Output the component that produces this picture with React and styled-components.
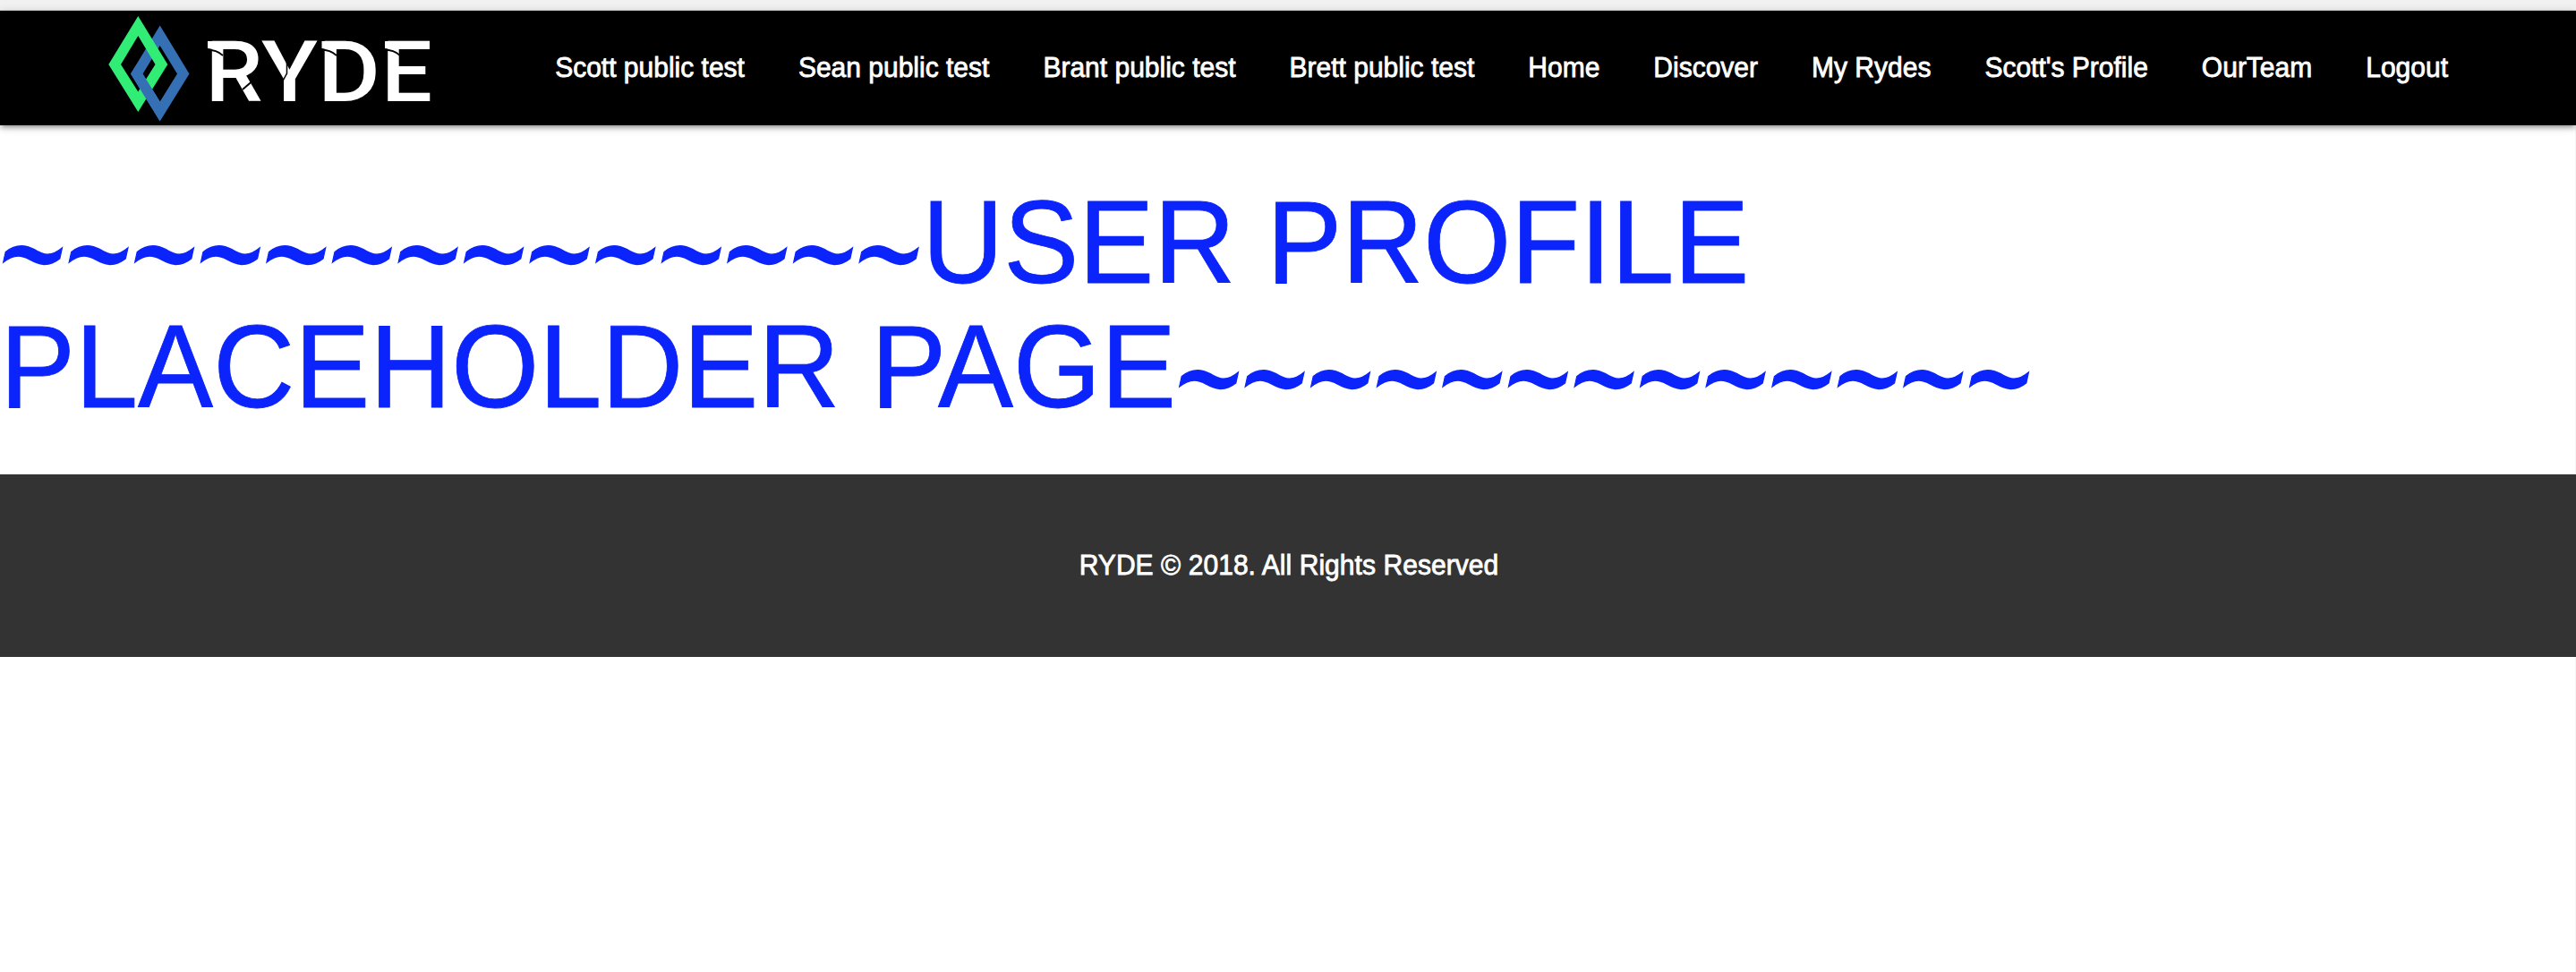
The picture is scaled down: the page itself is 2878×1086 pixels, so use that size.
import React from 'react';
import styled, { createGlobalStyle } from 'styled-components';

const GlobalStyle = createGlobalStyle`
  * { box-sizing: border-box; }
  body {
    margin: 0;
    background: #fff;
    color: #fff;
    font-family: "Liberation Sans", Helvetica, Arial, sans-serif;
    font-size: 30px;
  }
`;

const Page = styled.div`
  min-height: 1086px;
  border-right: 1px solid #f3f3f3;
`;

const TopStrip = styled.div`
  height: 12px;
  margin-right: -1px;
  background: #f1f1f1;
  border-bottom: 1px solid #cfcfcf;
`;

const Nav = styled.nav`
  display: flex;
  align-items: flex-start;
  justify-content: space-between;
  height: 128px;
  margin-right: -1px;
  padding: 0 113px 0 115px;
  background: #000;
  box-shadow: 0 4px 4px rgba(0, 0, 0, 0.14), 0 6px 2px -4px rgba(0, 0, 0, 0.12),
    0 2px 10px rgba(0, 0, 0, 0.2);
`;

const Logo = styled.svg`
  display: block;
  width: 375px;
  height: 128px;
`;

const Menu = styled.ul`
  display: flex;
  margin: 0;
  padding: 0;
  list-style: none;
`;

const MenuLink = styled.a`
  display: block;
  padding: 0 30px;
  line-height: 128px;
  white-space: nowrap;
  color: #fff;
  -webkit-text-stroke: 0.8px #fff;
  transform: scaleY(1.05);
  transform-origin: 50% 74px;
`;

const Title = styled.h1`
  margin: 62px 0 64.4px;
  color: #0b24fb;
  font-size: 126px;
  font-weight: 400;
  line-height: 132px;
  -webkit-text-stroke: 0.8px #0b24fb;
  transform: scaleY(1.05);
  transform-origin: 0 0;
`;

const Tildes = styled.span`
  display: inline-block;
  -webkit-text-stroke: 1.2px #0b24fb;
  transform: translateY(12px) scaleY(1.25) skewX(-16deg);
`;

const Footer = styled.footer`
  height: 204px;
  margin-right: -1px;
  background: #333;
  text-align: center;
  line-height: 204px;
`;

const Copyright = styled.span`
  display: block;
  padding-left: 2px;
  letter-spacing: 0.06px;
  -webkit-text-stroke: 0.8px #fff;
  transform: scaleY(1.05);
  transform-origin: 50% 112px;
`;

const links = [
  'Scott public test', 'Sean public test', 'Brant public test', 'Brett public test',
  'Home', 'Discover', 'My Rydes', "Scott's Profile", 'OurTeam', 'Logout',
];

function RydeLogo() {
  return (
    <Logo viewBox="115 12 375 128">
      <path fill="#3470b3" fillRule="evenodd" d="M178.7 28.5 211.5 82.5 178.7 135.5 146 82.5ZM178.7 51 159.5 82.5 178.7 113.5 198 82.5Z" />
      <path fill="#31ed75" fillRule="evenodd" d="M154.3 18 187.3 72 154.3 125 121.3 72ZM154.3 40 135 72 154.3 102.5 173.5 72Z" />
      <path fill="#3470b3" d="M146 82.5 152.5 72 159.5 82.5 178.7 113.5V135.5Z" />
      <g fill="#fff" fontFamily="Roboto, sans-serif" fontWeight="500" fontSize="94.5">
        <text x="229.5" y="113" textLength="64" lengthAdjust="spacingAndGlyphs">R</text>
        <text x="292" y="113" textLength="63" lengthAdjust="spacingAndGlyphs">Y</text>
        <text x="355" y="113" textLength="70" lengthAdjust="spacingAndGlyphs">D</text>
        <text x="426" y="113" textLength="57" lengthAdjust="spacingAndGlyphs">E</text>
      </g>
      {/* serifs that overhang the stems */}
      <path fill="#fff" d="M232 46h12v10l-12-2ZM359.500 46h12v10l-12-2ZM430 46h12v10l-12-2Z" />
      {/* stencil cuts */}
      <g fill="none" stroke="#000" strokeWidth="1.8">
        <path d="M231 55.500Q242 55.500 249 62" />
        <path d="M358.500 55.500Q369 55.500 376 62" />
        <path d="M429 55.500Q440 55.500 447 62" />
        <path d="M285 88 271 100" strokeWidth="2" />
        <path d="M320.500 70V82L315 92" strokeWidth="1.5" />
      </g>
    </Logo>
  );
}

export default function App() {
  return (
    <>
      <GlobalStyle />
      <Page>
        <TopStrip />
        <Nav>
          <RydeLogo />
          <Menu>
            {links.map((label) => (
              <li key={label}><MenuLink>{label}</MenuLink></li>
            ))}
          </Menu>
        </Nav>
        <Title>
          <Tildes>{'~'.repeat(14)}</Tildes>USER PROFILE PLACEHOLDER PAGE<Tildes>{'~'.repeat(13)}</Tildes>
        </Title>
        <Footer><Copyright>RYDE © 2018. All Rights Reserved</Copyright></Footer>
      </Page>
    </>
  );
}
